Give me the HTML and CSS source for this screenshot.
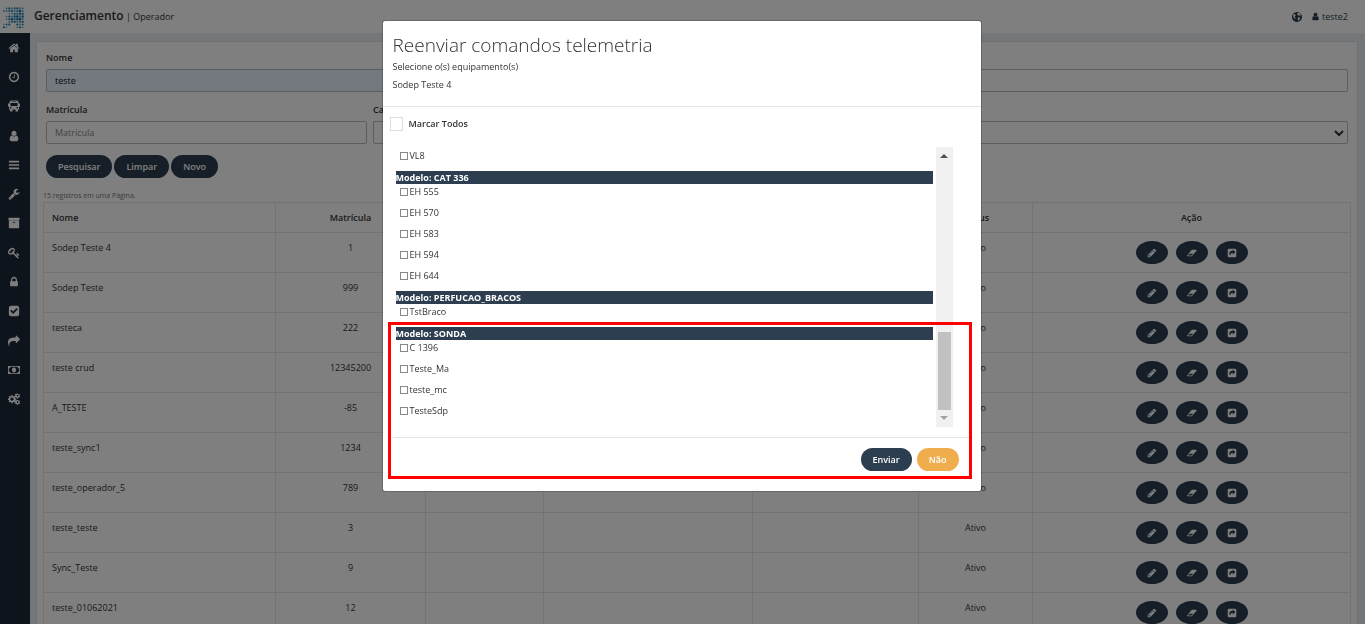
FILE: index.html
```html
<!DOCTYPE html>
<html lang="pt-BR">
    <head>
        <meta charset="utf-8">
        <title>Gerenciamento | Operador</title>
        <link rel="stylesheet" href="styles.css">
    </head>
    <body>
        <svg class="icon-defs" aria-hidden="true">
            <symbol id="home" viewBox="0 0 1792 1792"><path d="M1472 992v480q0 26-19 45t-45 19h-384v-384h-256v384h-384q-26 0-45-19t-19-45v-480q0-1 .5-3t.5-3l575-474 575 474q1 2 1 6zm223-69l-62 74q-8 9-21 11h-3q-13 0-21-7l-692-577-692 577q-12 8-24 7-13-2-21-11l-62-74q-8-10-7-23.5t11-21.5l719-599q32-26 76-26t76 26l244 204v-195q0-14 9-23t23-9h192q14 0 23 9t9 23v408l219 182q10 8 11 21.5t-7 23.5z"/></symbol>
            <symbol id="clock" viewBox="0 0 1792 1792"><path d="M1024 544v448q0 14-9 23t-23 9h-320q-14 0-23-9t-9-23v-64q0-14 9-23t23-9h224v-352q0-14 9-23t23-9h64q14 0 23 9t9 23zm416 352q0-148-73-273t-198-198-273-73-273 73-198 198-73 273 73 273 198 198 273 73 273-73 198-198 73-273zm224 0q0 209-103 385.5t-279.5 279.5-385.5 103-385.5-103-279.5-279.5-103-385.5 103-385.5 279.5-279.5 385.5-103 385.5 103 279.5 279.5 103 385.5z"/></symbol>
            <symbol id="bus" viewBox="0 0 24 24"><path fill-rule="evenodd" d="M6 1h12q3 0 3 3v3h3v6h-2v6h-2v4h-5v-4H9v4H4v-4H2v-6H0V7h3V4q0-3 3-3zM7 3v1h10V3zM5 6v6h14V6zM4 14v3h3v-3zM17 14v3h3v-3z"/></symbol>
            <symbol id="user" viewBox="0 0 1792 1792"><path d="M1536 1399q0 109-62.5 187t-150.5 78h-854q-88 0-150.5-78t-62.5-187q0-85 8.5-160.5t31.5-152 58.5-131 94-89 134.5-34.5q131 128 313 128t313-128q76 0 134.5 34.5t94 89 58.5 131 31.5 152 8.5 160.5zm-256-887q0 159-112.5 271.5t-271.5 112.5-271.5-112.5-112.5-271.5 112.5-271.5 271.5-112.5 271.5 112.5 112.5 271.5z"/></symbol>
            <symbol id="bars" viewBox="0 0 1792 1792"><path d="M1664 1344v128q0 26-19 45t-45 19H192q-26 0-45-19t-19-45v-128q0-26 19-45t45-19h1408q26 0 45 19t19 45zm0-512v128q0 26-19 45t-45 19H192q-26 0-45-19t-19-45V832q0-26 19-45t45-19h1408q26 0 45 19t19 45zm0-512v128q0 26-19 45t-45 19H192q-26 0-45-19t-19-45V320q0-26 19-45t45-19h1408q26 0 45 19t19 45z"/></symbol>
            <symbol id="wrench" viewBox="0 0 1792 1792"><path d="M448 1472q0-26-19-45t-45-19-45 19-19 45 19 45 45 19 45-19 19-45zm644-420l-682 682q-37 37-90 37-52 0-91-37l-106-108q-38-36-38-90 0-53 38-91l681-681q39 98 114.5 173.5t173.5 114.5zm634-435q0 39-23 106-47 134-164.5 217.5t-258.5 83.5q-185 0-316.5-131.5t-131.5-316.5 131.5-316.5 316.5-131.5q58 0 121.5 16.5t107.5 46.5q16 11 16 28t-16 28l-293 169v224l193 107q5-3 79-48.5t135.5-81 70.5-35.5q15 0 23.5 10t8.5 25z"/></symbol>
            <symbol id="archive" viewBox="0 0 1792 1792"><path d="M1088 832q0-26-19-45t-45-19h-256q-26 0-45 19t-19 45 19 45 45 19h256q26 0 45-19t19-45zm576-192v960q0 26-19 45t-45 19h-1408q-26 0-45-19t-19-45v-960q0-26 19-45t45-19h1408q26 0 45 19t19 45zm64-448v256q0 26-19 45t-45 19h-1536q-26 0-45-19t-19-45v-256q0-26 19-45t45-19h1536q26 0 45 19t19 45z"/></symbol>
            <symbol id="key" viewBox="0 0 1792 1792"><path d="M832 512q0-80-56-136t-136-56-136 56-56 136q0 42 19 83-41-19-83-19-80 0-136 56t-56 136 56 136 136 56 136-56 56-136q0-42-19-83 41 19 83 19 80 0 136-56t56-136zm851 704q0 17-49 66t-66 49q-9 0-28.5-16t-36.5-33-38.5-40-24.5-26l-96 96 220 220q28 28 28 68 0 42-39 81t-81 39q-40 0-68-28l-671-671q-176 131-365 131-163 0-265.5-102.5t-102.5-265.5q0-160 95-313t248-248 313-95q163 0 265.5 102.5t102.5 265.5q0 189-131 365l355 355 96-96q-3-3-26-24.5t-40-38.5-33-36.5-16-28.5q0-17 49-66t66-49q13 0 23 10 6 6 46 44.5t82 79.5 86.5 86 73 78 28.5 41z"/></symbol>
            <symbol id="lock" viewBox="0 0 1792 1792"><path d="M640 768h512v-192q0-106-75-181t-181-75-181 75-75 181v192zm832 96v576q0 40-28 68t-68 28h-960q-40 0-68-28t-28-68v-576q0-40 28-68t68-28h32v-192q0-184 132-316t316-132 316 132 132 316v192h32q40 0 68 28t28 68z"/></symbol>
            <symbol id="check" viewBox="0 0 1792 1792"><path d="M813 1299l614-614q19-19 19-45t-19-45l-102-102q-19-19-45-19t-45 19l-467 467-211-211q-19-19-45-19t-45 19l-102 102q-19 19-19 45t19 45l358 358q19 19 45 19t45-19zm851-883v960q0 119-84.5 203.5t-203.5 84.5h-960q-119 0-203.5-84.5t-84.5-203.5v-960q0-119 84.5-203.5t203.5-84.5h960q119 0 203.5 84.5t84.5 203.5z"/></symbol>
            <symbol id="share" viewBox="0 0 1792 1792"><path d="M1792 640q0 26-19 45l-512 512q-19 19-45 19t-45-19-19-45v-256h-224q-98 0-175.5 6t-154 21.5-133 42.5-105.5 69.5-80 101-48.5 138.5-17.5 181q0 55 5 123 0 6 2.5 23.5t2.5 26.5q0 15-8.5 25t-23.5 10q-16 0-28-17-7-9-13-22t-13.5-30-10.5-24q-127-285-127-451 0-199 53-333 162-403 875-403h224v-256q0-26 19-45t45-19 45 19l512 512q19 19 19 45z"/></symbol>
            <symbol id="money" viewBox="0 0 1920 1792"><path fill-rule="evenodd" d="M64 256h1792q64 0 64 64v1152q0 64-64 64H64q-64 0-64-64V320q0-64 64-64zm320 128q0 106-75 181t-181 75v512q106 0 181 75t75 181h1152q0-106 75-181t181-75V640q-106 0-181-75t-75-181zM960 512q320 0 320 384t-320 384-320-384 320-384z"/><path d="M1010 640v416h106v96H804v-96h96V784q-40 34-82 48l-58-68q80-36 140-124z"/></symbol>
            <symbol id="cogs" viewBox="0 0 1920 1792"><path fill-rule="evenodd" d="M540 256h200l34 184 112 46 154-108 142 142-108 154 46 112 184 34v200l-184 34-46 112 108 154-142 142-154-108-112 46-34 184H540l-34-184-112-46-154 108L98 1320l108-154-46-112-184-34V820l184-34 46-112L98 520l142-142 154 108 112-46zM640 664a256 256 0 1 0 1 0z"/><path fill-rule="evenodd" d="M1480 30l110 96h90l130-50 100 140-70 110v86l110 90-90 150-140-20-80 40-60 130h-170l-44-130-80-44-136 20-80-150 110-110v-86l-100-116 90-140 140 40 70-40 40-100zm50 200a126 126 0 1 0 1 0zM1480 1054l110 96h90l130-50 100 140-70 110v86l110 90-90 150-140-20-80 40-60 130h-170l-44-130-80-44-136 20-80-150 110-110v-86l-100-116 90-140 140 40 70-40 40-100zm50 200a126 126 0 1 0 1 0z"/></symbol>
            <symbol id="globe" viewBox="0 0 16 16"><path fill-rule="evenodd" d="M8 0a8 8 0 1 0 .01 0zM8 2l3-1 3 3v2l-2-1-2 1-1-2zM10 8l3 1-1 3-2 2-1-3zM2 4l3-1 1 2-2 2 2 3-1 1-3-3z"/></symbol>
            <symbol id="pencil" viewBox="0 0 1792 1792"><path d="M491 1536l91-91-235-235-91 91v107h128v128h107zm523-928q0-22-22-22-10 0-17 7l-542 542q-7 7-7 17 0 22 22 22 10 0 17-7l542-542q7-7 7-17zm-54-192l416 416-832 832h-416v-416zm683 96q0 53-37 90l-166 166-416-416 166-165q36-38 90-38 53 0 91 38l235 234q37 39 37 91z"/></symbol>
            <symbol id="eraser" viewBox="-64 0 1984 1792"><path d="M832 1408l336-384h-768l-336 384h768zm1013-1077q15 34 9.500 71.500t-30.500 65.500l-896 1024q-38 44-96 44h-768q-38 0-69.500-20.500t-47.500-54.500q-15-34-9.500-71.500t30.500-65.500l896-1024q38-44 96-44h768q38 0 69.500 20.500t47.500 54.500z"/></symbol>
            <symbol id="share-square" viewBox="0 0 1792 1792"><path fill-rule="evenodd" d="M350 128h1092q222 0 222 222v1092q0 222-222 222H350q-222 0-222-222V350q0-222 222-222zm690 192v192q-624 0-624 480 0 200 130 330 40 30 46-20-40-390 448-390v192q10 70 76 30l350-360q30-38 0-76l-350-400q-66-40-76 22z"/></symbol>
        </svg>

        <header class="topbar">
            <a class="brand" href="#" aria-label="Início">
                <svg class="logo" viewBox="0 0 24 24"></svg>
            </a>
            <p class="crumb"><span class="crumb-title">Gerenciamento</span> | Operador</p>
            <nav class="user-menu">
                <a href="#" aria-label="Idioma"><svg class="globe-icon"><use href="#globe"/></svg></a>
                <a href="#"><svg class="user-icon"><use href="#user"/></svg>teste2</a>
            </nav>
        </header>

        <div class="page">
            <nav class="sidebar"></nav>

            <main class="panel">
                <form class="filters">
                    <div class="field half">
                        <label for="nome">Nome</label>
                        <input id="nome" class="filled" type="text" value="teste">
                    </div>
                    <div class="field half">
                        <label for="extra">&nbsp;</label>
                        <input id="extra" type="text">
                    </div>
                    <div class="field">
                        <label for="matricula">Matrícula</label>
                        <input id="matricula" type="text" placeholder="Matrícula">
                    </div>
                    <div class="field">
                        <label for="cargo">Cargo</label>
                        <input id="cargo" type="text">
                    </div>
                    <div class="field half">
                        <label for="status">&nbsp;</label>
                        <div class="select-box">
                            <select id="status"><option></option></select>
                            <svg viewBox="0 0 10 8"><path d="M1 2l4 4 4-4"/></svg>
                        </div>
                    </div>
                </form>
                <div class="buttons">
                    <button class="btn">Pesquisar</button>
                    <button class="btn">Limpar</button>
                    <button class="btn">Novo</button>
                </div>
                <p class="records">15 registros em uma Página.</p>
                <table class="operators">
                    <colgroup>
                        <col class="col-name"><col class="col-number"><col class="col-a"><col class="col-b">
                        <col class="col-c"><col class="col-status"><col class="col-action">
                    </colgroup>
                    <thead>
                        <tr><th class="name">Nome</th><th>Matrícula</th><th></th><th></th><th></th><th>Status</th><th>Ação</th></tr>
                    </thead>
                    <tbody></tbody>
                </table>
            </main>
        </div>

        <div class="backdrop">
            <section class="modal" role="dialog" aria-labelledby="modal-title">
                <div class="modal-header">
                    <h1 id="modal-title">Reenviar comandos telemetria</h1>
                    <p>Selecione o(s) equipamento(s)</p>
                    <p>Sodep Teste 4</p>
                </div>
                <div class="modal-body">
                    <label class="check-all"><input type="checkbox">Marcar Todos</label>
                    <div class="equipment">
                        <div class="groups">
                            <ul>
                                <li><label><input type="checkbox">VL8</label></li>
                            </ul>
                            <h2>Modelo: CAT 336</h2>
                            <ul>
                                <li><label><input type="checkbox">EH 555</label></li>
                                <li><label><input type="checkbox">EH 570</label></li>
                                <li><label><input type="checkbox">EH 583</label></li>
                                <li><label><input type="checkbox">EH 594</label></li>
                                <li><label><input type="checkbox">EH 644</label></li>
                            </ul>
                            <h2>Modelo: PERFUCAO_BRACOS</h2>
                            <ul>
                                <li><label><input type="checkbox">TstBraco</label></li>
                            </ul>
                            <h2>Modelo: SONDA</h2>
                            <ul>
                                <li><label><input type="checkbox">C 1396</label></li>
                                <li><label><input type="checkbox">Teste_Ma</label></li>
                                <li><label><input type="checkbox">teste_mc</label></li>
                                <li><label><input type="checkbox">TesteSdp</label></li>
                            </ul>
                        </div>
                        <div class="scrollbar">
                            <span class="arrow-up"></span>
                            <span class="thumb"></span>
                            <span class="arrow-down"></span>
                        </div>
                    </div>
                </div>
                <div class="modal-footer">
                    <button class="btn">Enviar</button>
                    <button class="btn btn-warning">Não</button>
                </div>
                <div class="highlight"></div>
            </section>
        </div>

        <script>
            const menu=['home','clock','bus','user','bars','wrench','archive','key','lock','check','share','money','cogs'];
            let menuHTML='';
            menu.forEach(function(icon){
                menuHTML+=`<a href="#" aria-label="${icon}"><svg><use href="#${icon}"/></svg></a>`;
            });
            document.querySelector('.sidebar').innerHTML=menuHTML;

            const operators=[
                ['Sodep Teste 4','1'],
                ['Sodep Teste','999'],
                ['testeca','222'],
                ['teste crud','12345200'],
                ['A_TESTE','-85'],
                ['teste_sync1','1234'],
                ['teste_operador_5','789'],
                ['teste_teste','3'],
                ['Sync_Teste','9'],
                ['teste_01062021','12']
            ];
            let rowsHTML='';
            operators.forEach(function(operator){
                rowsHTML+=`<tr>
                    <td class="name">${operator[0]}</td><td>${operator[1]}</td><td></td><td></td><td></td><td>Ativo</td>
                    <td class="actions">
                        <div class="action-list">
                            <button class="round" aria-label="Editar"><svg><use href="#pencil"/></svg></button>
                            <button class="round" aria-label="Apagar"><svg><use href="#eraser"/></svg></button>
                            <button class="round" aria-label="Reenviar"><svg><use href="#share-square"/></svg></button>
                        </div>
                    </td>
                </tr>`;
            });
            document.querySelector('.operators tbody').innerHTML=rowsHTML;

            // logo: grid of dots, 0 = empty, 1 to 3 = dot size
            const dots=[
                '01222221',
                '12222232',
                '00112332',
                '01223333',
                '01233332',
                '00222222',
                '12200222',
                '21000121'
            ];
            const blues=['#5fb4d8','#2f8fbe','#1f6f9c'];
            let dotsHTML='';
            dots.forEach(function(line,y){
                line.split('').forEach(function(size,x){
                    if(size!=='0'){
                        dotsHTML+=`<circle cx="${x*2.8+2}" cy="${y*2.8+2}" r="${0.6+size*0.25}" fill="${blues[(x+y*2)%3]}"/>`;
                    }
                });
            });
            document.querySelector('.logo').innerHTML=dotsHTML;
        </script>
    </body>
</html>
```

FILE: styles.css
```css
*{
    box-sizing: border-box;
}

body{
    margin: 0;
    height: 100vh;
    overflow: hidden;
    background-color: #e9eef5;
    color: #333;
    font-family: "Open Sans", sans-serif;
    font-size: 9px;
    line-height: 14px;
}

p, h1, h2, ul{
    margin: 0;
    padding: 0;
}

a{
    color: #2c3e50;
    text-decoration: none;
}

svg{
    fill: currentColor;
}

.icon-defs{
    display: none;
}

.topbar{
    display: flex;
    align-items: center;
    height: 33px;
    padding: 0 17px 0 2px;
    background-color: white;
}

.brand{
    display: flex;
    margin-right: 9px;
    padding-top: 3px;
}

.logo{
    width: 23px;
    height: 24px;
}

.crumb-title{
    font-size: 12px;
    font-weight: 600;
}

.user-menu{
    display: flex;
    gap: 9px;
    margin-left: auto;
}

.user-menu a{
    display: flex;
    align-items: center;
    gap: 2px;
}

.globe-icon{
    width: 10px;
    height: 10px;
}

.user-icon{
    width: 9px;
    height: 9px;
}

.page{
    display: flex;
    height: calc(100vh - 33px);
}

.sidebar{
    display: grid;
    grid-auto-rows: 1fr;
    align-self: stretch;
    flex: none;
    width: 30px;
    padding-bottom: 210px;
    background-color: #1c2836;
}

.sidebar a{
    display: flex;
    align-items: center;
    padding-left: 8px;
    color: white;
}

.sidebar svg{
    width: 12px;
    height: 12px;
}

.panel{
    flex: 1;
    align-self: flex-start;
    margin: 8px 7px 0 6px;
    padding: 8px 6px;
    background-color: white;
    border: 1px solid #dde2e8;
}

.filters{
    display: grid;
    grid-template-columns: repeat(4, 1fr);
    gap: 10px 6px;
    padding: 0 3px;
}

.half{
    grid-column: span 2;
}

.field label{
    display: block;
    height: 19px;
    line-height: 15px;
    font-weight: 600;
}

.field input,
.field select{
    display: block;
    width: 100%;
    height: 23px;
    padding: 0 8px;
    background-color: white;
    border: 1px solid #bbb;
    border-radius: 2px;
    color: #111;
    font: inherit;
}

.field input.filled{
    background-color: #e8f0fe;
}

.field input::placeholder{
    color: #888;
}

.field select{
    appearance: none;
}

.select-box{
    display: grid;
    align-items: center;
}

.select-box select,
.select-box svg{
    grid-area: 1 / 1;
}

.select-box svg{
    justify-self: end;
    width: 10px;
    height: 8px;
    margin-right: 4px;
    fill: none;
    stroke: #333;
    stroke-width: 2;
    pointer-events: none;
}

.buttons{
    display: flex;
    gap: 2px;
    padding: 11px 3px 12px;
}

.btn{
    height: 23px;
    padding: 0 12px;
    background-color: #2c3e50;
    border: none;
    border-radius: 12px;
    color: white;
    font-family: inherit;
    font-size: 9px;
    font-weight: 600;
    cursor: pointer;
}

.records{
    color: #777;
    font-size: 7px;
    line-height: 12px;
}

.operators{
    width: 100%;
    table-layout: fixed;
    border-collapse: collapse;
}

.operators th,
.operators td{
    padding: 8px;
    border: 1px solid #e7e7e7;
    text-align: center;
    vertical-align: top;
}

.operators th{
    height: 30px;
    padding: 8px 8px 6px;
    font-weight: 600;
}

.operators td{
    height: 40px;
}

.operators .name{
    text-align: left;
}

.operators .actions{
    padding: 0;
    vertical-align: middle;
}

.col-name{ width: 232px; }
.col-number{ width: 150px; }
.col-a{ width: 118px; }
.col-b{ width: 209px; }
.col-c{ width: 166px; }
.col-status{ width: 114px; }

.action-list{
    display: flex;
    justify-content: center;
    gap: 8px;
}

.round{
    display: flex;
    align-items: center;
    justify-content: center;
    width: 32px;
    height: 23px;
    padding: 0;
    background-color: #2c3e50;
    border: none;
    border-radius: 50%;
    color: white;
    cursor: pointer;
}

.round svg{
    width: 10px;
    height: 10px;
}

.backdrop{
    position: fixed;
    inset: 0;
    display: flex;
    align-items: flex-start;
    justify-content: center;
    padding: 20px 2px 0 0;
    background-color: rgba(0,0,0,0.5);
}

.modal{
    position: relative;
    width: 600px;
    background-color: white;
    background-clip: padding-box;
    border: 1px solid rgba(0,0,0,0.2);
    border-radius: 3px;
}

.modal-header{
    padding: 11px 10px 12px;
    border-bottom: 1px solid #e5e5e5;
}

.modal-header h1{
    font-size: 19px;
    font-weight: 300;
    line-height: 26px;
}

.modal-header p{
    line-height: 18px;
}

.modal-body{
    padding: 10px 28px 10px 7px;
}

.check-all{
    display: flex;
    align-items: center;
    gap: 6px;
    font-weight: 600;
}

.check-all input{
    appearance: none;
    width: 13px;
    height: 14px;
    margin: 0;
    border: 1px solid #ddd;
}

.equipment{
    display: flex;
    gap: 3px;
    margin-top: 16px;
    padding-left: 6px;
}

.groups{
    flex: 1;
    padding: 1px 0;
}

.groups h2{
    height: 13px;
    background-color: #2c3e50;
    color: white;
    font-size: 9px;
    font-weight: 700;
    line-height: 13px;
}

.groups ul{
    padding: 1px 0 1px 4px;
    list-style: none;
}

.groups li{
    height: 21px;
}

.groups li label{
    display: flex;
    align-items: center;
    gap: 2px;
}

.groups li input{
    appearance: none;
    width: 8px;
    height: 8px;
    margin: 0;
    border: 1px solid #888;
}

.scrollbar{
    display: flex;
    flex-direction: column;
    align-items: center;
    width: 17px;
    padding: 7px 0;
    background-color: #f1f1f1;
}

.arrow-up,
.arrow-down{
    border: 4px solid transparent;
    border-top-width: 0;
    border-bottom: 4px solid #505050;
}

.arrow-down{
    border-top: 4px solid #a3a3a3;
    border-bottom-width: 0;
}

.thumb{
    width: 13px;
    height: 78px;
    margin: auto 0 6px;
    background-color: #c1c1c1;
}

.modal-footer{
    display: flex;
    justify-content: flex-end;
    gap: 5px;
    margin: 0 12px 0 10px;
    padding: 10px 10px 20px 0;
    border-top: 1px solid #e5e5e5;
}

.btn-warning{
    background-color: #f0ad4e;
}

/* sits over the last group and the footer */
.highlight{
    position: absolute;
    left: 5px;
    right: 9px;
    top: 301px;
    bottom: 12px;
    border: 3px solid red;
    pointer-events: none;
}
```
